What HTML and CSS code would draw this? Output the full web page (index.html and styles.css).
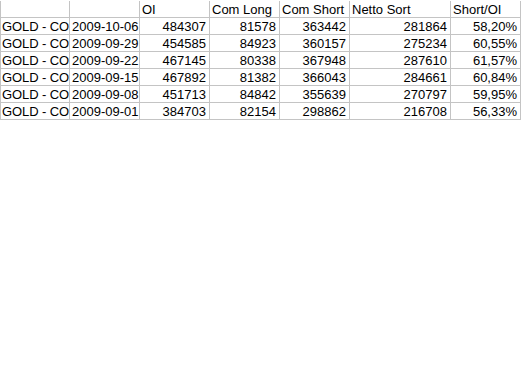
FILE: index.html
```
<!DOCTYPE html>
<html>
<head>
<meta charset="utf-8">
<link rel="stylesheet" href="styles.css">
</head>
<body>
<div class="sheet">
  <div class="c first"></div><div class="c"></div><div class="c">OI</div><div class="c">Com Long</div><div class="c">Com Short</div><div class="c">Netto Sort</div><div class="c">Short/OI</div>
  <div class="c first">GOLD - CO</div><div class="c">2009-10-06</div><div class="c n">484307</div><div class="c n">81578</div><div class="c n">363442</div><div class="c n">281864</div><div class="c n">58,20%</div>
  <div class="c first">GOLD - CO</div><div class="c">2009-09-29</div><div class="c n">454585</div><div class="c n">84923</div><div class="c n">360157</div><div class="c n">275234</div><div class="c n">60,55%</div>
  <div class="c first">GOLD - CO</div><div class="c">2009-09-22</div><div class="c n">467145</div><div class="c n">80338</div><div class="c n">367948</div><div class="c n">287610</div><div class="c n">61,57%</div>
  <div class="c first">GOLD - CO</div><div class="c">2009-09-15</div><div class="c n">467892</div><div class="c n">81382</div><div class="c n">366043</div><div class="c n">284661</div><div class="c n">60,84%</div>
  <div class="c first">GOLD - CO</div><div class="c">2009-09-08</div><div class="c n">451713</div><div class="c n">84842</div><div class="c n">355639</div><div class="c n">270797</div><div class="c n">59,95%</div>
  <div class="c first">GOLD - CO</div><div class="c">2009-09-01</div><div class="c n">384703</div><div class="c n">82154</div><div class="c n">298862</div><div class="c n">216708</div><div class="c n">56,33%</div>
</div>
</body>
</html>
```
FILE: styles.css
```
html, body {
  margin: 0;
  padding: 0;
  background: #fff;
}
.sheet {
  display: grid;
  grid-template-columns: 70px 70px 70px 70px 70px 101px 70px;
  grid-auto-rows: 17px;
  width: 522px;
  padding-top: 1px;
  font-family: "Liberation Sans", Arial, sans-serif;
  font-size: 13px;
  color: #000;
}
.c {
  border-right: 1px solid #c4c4c4;
  border-bottom: 1px solid #c4c4c4;
  padding: 0 3px 0 2px;
  line-height: 17px;
  white-space: nowrap;
  overflow: hidden;
  box-sizing: border-box;
  height: 17px;
}
.first {
  border-left: 1px solid #c4c4c4;
  padding-left: 1px;
  padding-right: 0;
  letter-spacing: -0.1px;
}
.n {
  text-align: right;
}
```
